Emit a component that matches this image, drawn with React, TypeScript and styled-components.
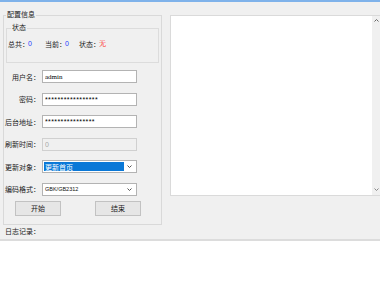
import React from "react";
import styled, { createGlobalStyle } from "styled-components";

const GlobalStyle = createGlobalStyle`
  html, body { margin: 0; padding: 0; background: #f0f0f0; }
  body {
    font-family: "Noto Sans CJK SC", "Noto Sans", sans-serif;
    font-size: 7px;
    color: #1a1a1a;
  }
  * { box-sizing: border-box; }
`;

const Window = styled.div`
  width: 380px;
  height: 282px;
  display: flex;
  flex-direction: column;
  overflow: hidden;
  background: #f0f0f0;
`;

const TitleStrip = styled.div`
  flex: none;
  height: 2px;
  background: #7fb2ea;
`;

const Main = styled.div`
  flex: none;
  height: 237px;
  display: flex;
  gap: 8px;
  padding: 7px 0 0 3px;
`;

const LeftColumn = styled.div`
  flex: none;
  width: 159px;
  display: flex;
  flex-direction: column;
`;

const GroupBox = styled.fieldset`
  margin: 0;
  min-width: 0;
  padding: 0 2px 8px;
  border: 1px solid #d9d9d9;
`;

const GroupTitle = styled.legend<{ $indent?: number }>`
  padding: 0 1px 3px;
  margin-left: ${(p) => p.$indent ?? 0}px;
  line-height: 10px;
  font-size: 7px;
`;

const StatusBox = styled.fieldset`
  margin: 0;
  min-width: 0;
  padding: 4px 1px 13px;
  border: 1px solid #dcdcdc;
`;

const StatRow = styled.div`
  display: flex;
  line-height: 10px;
`;

const Stat = styled.div<{ $w?: number }>`
  display: flex;
  flex: none;
  width: ${(p) => (p.$w ? `${p.$w}px` : "auto")};
`;

const StatValue = styled.span<{ $color: string }>`
  margin-left: -1px;
  color: ${(p) => p.$color};
  font-family: "Liberation Sans", sans-serif;
`;

const FormGrid = styled.div`
  display: grid;
  grid-template-columns: 36px 95px;
  column-gap: 2px;
  row-gap: 9.5px;
  align-items: center;
  margin: 7px 0 0 -2px;
`;

const FieldLabel = styled.label`
  text-align: right;
  white-space: nowrap;
  line-height: 10px;
`;

const TextField = styled.input<{ $secret?: boolean }>`
  display: block;
  width: 95px;
  height: 13px;
  margin: 0;
  padding: 0 2px;
  border: 1px solid #b3b3b3;
  background: #fff;
  outline: none;
  font-family: ${(p) =>
    p.$secret ? '"Liberation Sans", sans-serif' : '"Liberation Serif", serif'};
  font-size: 7px;
  letter-spacing: ${(p) => (p.$secret ? "0.4px" : "0")};
  color: #000;

  &:disabled {
    background: #f0f0f0;
    border-color: #d0d0d0;
    color: #a8a8a8;
  }
`;

const Combo = styled.div`
  width: 95px;
  height: 13px;
  border: 1px solid #b3b3b3;
  background: #fff;
  display: flex;
  align-items: center;
  padding: 1px;
`;

const ComboText = styled.div<{ $selected?: boolean }>`
  flex: 1;
  height: 100%;
  display: flex;
  align-items: center;
  padding-left: 1px;
  background: ${(p) => (p.$selected ? "#0a78d7" : "transparent")};
  color: ${(p) => (p.$selected ? "#fff" : "#111")};
  font-size: ${(p) => (p.$selected ? "7px" : "5.5px")};
  font-family: ${(p) =>
    p.$selected
      ? '"Noto Sans CJK SC", sans-serif'
      : '"Liberation Sans", sans-serif'};
`;

const ComboArrow = styled.div`
  flex: none;
  width: 11px;
  display: flex;
  justify-content: center;
  align-items: center;
`;

const ButtonRow = styled.div`
  display: flex;
  gap: 34px;
  margin: 5px 0 0 9px;
`;

const PushButton = styled.button`
  width: 46px;
  height: 15px;
  margin: 0;
  padding: 0;
  border: 1px solid #c2c2c2;
  background: #e6e6e6;
  font-family: "Noto Sans CJK SC", sans-serif;
  font-size: 7px;
  color: #1a1a1a;
`;

const LogLabel = styled.div`
  margin: 1px 0 0 2px;
  line-height: 10px;
`;

const OutputPanel = styled.div`
  flex: none;
  width: 210px;
  height: 181px;
  margin-top: 6px;
  display: flex;
  border: 1px solid #dadada;
  border-right: none;
`;

const OutputArea = styled.div`
  flex: 1;
  background: #fff;
`;

const ScrollBar = styled.div`
  flex: none;
  width: 8px;
  display: flex;
  flex-direction: column;
  justify-content: space-between;
  align-items: center;
  padding: 3px 0 4px;
  background: #f0f0f0;
`;

const Separator = styled.div`
  flex: none;
  height: 2px;
  background: #dcdcdc;
`;

const LogArea = styled.div`
  flex: 1;
  background: #fff;
`;

const Chevron = ({ up, color = "#555" }: { up?: boolean; color?: string }) => (
  <svg width="5" height="3" viewBox="0 0 5 3">
    <polyline
      points={up ? "0.5,2.5 2.5,0.5 4.5,2.5" : "0.5,0.5 2.5,2.5 4.5,0.5"}
      fill="none"
      stroke={color}
      strokeWidth="1"
    />
  </svg>
);

export default function App() {
  return (
    <Window>
      <GlobalStyle />
      <TitleStrip />
      <Main>
        <LeftColumn>
          <GroupBox>
            <GroupTitle>配置信息</GroupTitle>
            <StatusBox>
              <GroupTitle $indent={3}>状态</GroupTitle>
              <StatRow>
                <Stat $w={37}>
                  <span>总共：</span>
                  <StatValue $color="#1f3cff">0</StatValue>
                </Stat>
                <Stat $w={34}>
                  <span>当前：</span>
                  <StatValue $color="#1f3cff">0</StatValue>
                </Stat>
                <Stat>
                  <span>状态：</span>
                  <StatValue $color="#ff1a1a">无</StatValue>
                </Stat>
              </StatRow>
            </StatusBox>
            <FormGrid>
              <FieldLabel>用户名：</FieldLabel>
              <TextField readOnly value="admin" />
              <FieldLabel>密码：</FieldLabel>
              <TextField readOnly $secret value="*****************" />
              <FieldLabel>后台地址：</FieldLabel>
              <TextField readOnly $secret value="****************" />
              <FieldLabel>刷新时间：</FieldLabel>
              <TextField disabled $secret value="0" />
              <FieldLabel>更新对象：</FieldLabel>
              <Combo>
                <ComboText $selected>更新首页</ComboText>
                <ComboArrow>
                  <Chevron />
                </ComboArrow>
              </Combo>
              <FieldLabel>编码格式：</FieldLabel>
              <Combo>
                <ComboText>GBK/GB2312</ComboText>
                <ComboArrow>
                  <Chevron />
                </ComboArrow>
              </Combo>
            </FormGrid>
            <ButtonRow>
              <PushButton>开始</PushButton>
              <PushButton>结束</PushButton>
            </ButtonRow>
          </GroupBox>
          <LogLabel>日志记录：</LogLabel>
        </LeftColumn>
        <OutputPanel>
          <OutputArea />
          <ScrollBar>
            <Chevron up color="#666" />
            <Chevron color="#888" />
          </ScrollBar>
        </OutputPanel>
      </Main>
      <Separator />
      <LogArea />
    </Window>
  );
}
